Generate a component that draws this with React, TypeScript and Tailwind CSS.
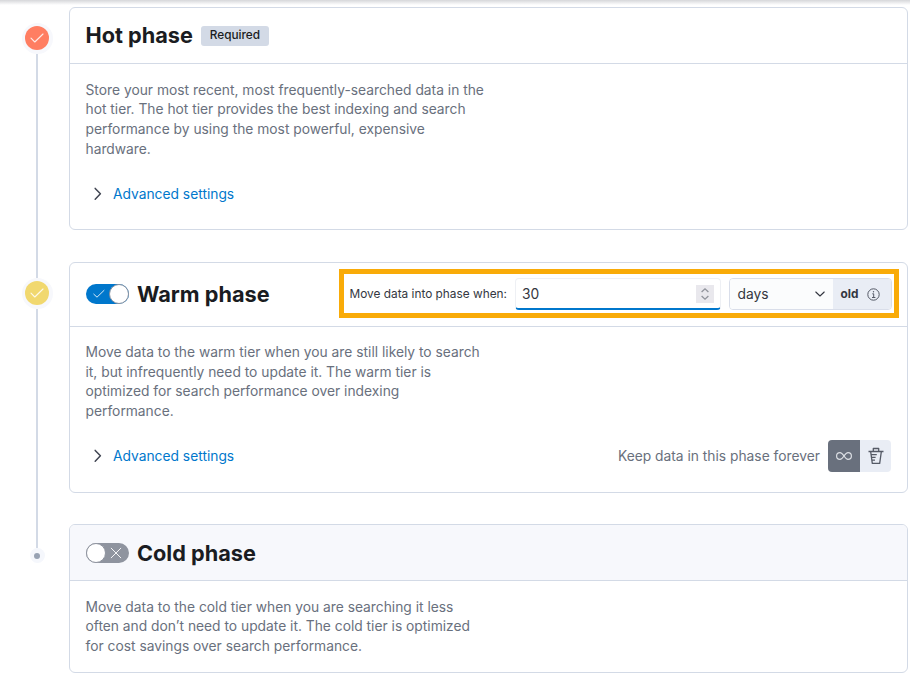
import type { ReactNode } from "react";

function StatusIcon({ color }: { color: string }) {
  return (
    <div className="flex size-[31px] shrink-0 items-center justify-center rounded-full bg-[#f7f8fc]">
      <div className={`flex size-[24px] items-center justify-center rounded-full ${color}`}>
        <svg width="16" height="16" viewBox="0 0 16 16" fill="none" stroke="#fff" strokeOpacity="0.85" strokeWidth="1.1" strokeLinecap="round" strokeLinejoin="round">
          <path d="M2 8.2 L5.8 12 L14 4" />
        </svg>
      </div>
    </div>
  );
}

function Timeline() {
  return (
    <div className="flex w-[69px] shrink-0 flex-col pt-[22.5px] pl-[21.8px]">
      <div className="flex w-[31px] flex-col items-center">
        <StatusIcon color="bg-[#ff7e62]" />
        <div className="h-[224px] w-[2px] bg-[#d3dae6]" />
        <StatusIcon color="bg-[#f1d86f]" />
        <div className="h-[239.5px] w-[2px] bg-[#d3dae6]" />
        <div className="flex size-[15px] items-center justify-center rounded-full bg-[#f5f7fc]">
          <div className="size-[6px] rounded-full bg-[#98a2b3]" />
        </div>
      </div>
    </div>
  );
}

function Title({ children }: { children: ReactNode }) {
  return <h2 className="text-[21.7px] leading-[28px] font-bold whitespace-nowrap text-[#1a1c21]">{children}</h2>;
}

function Description({ lines }: { lines: string[] }) {
  return (
    <p className="text-[13.81px] leading-[19.7px] whitespace-nowrap text-[#69707d]">
      {lines.map((line) => (
        <span key={line} className="block">{line}</span>
      ))}
    </p>
  );
}

function AdvancedSettings() {
  return (
    <button className="flex items-center pl-[4px] text-[13.8px] leading-[20px] text-[#0077cc]">
      <svg className="mr-[7.5px]" width="16" height="16" viewBox="0 0 16 16" fill="none" stroke="#404552" strokeWidth="1.5" strokeLinecap="round" strokeLinejoin="round">
        <path d="M5.2 2.4 L10.4 7.8 L5.2 13.2" />
      </svg>
      Advanced settings
    </button>
  );
}

function Toggle({ on }: { on: boolean }) {
  return on ? (
    <div className="flex h-[20px] w-[43.5px] items-center justify-between rounded-full bg-[#0077cc] pl-[7px]">
      <svg width="12" height="12" viewBox="0 0 12 12" fill="none" stroke="#fff" strokeOpacity="0.85" strokeWidth="1" strokeLinecap="round" strokeLinejoin="round">
        <path d="M0.8 6.2 L4 9.2 L11 2.4" />
      </svg>
      <div className="size-[20px] rounded-full border border-[#8b929f] bg-white" />
    </div>
  ) : (
    <div className="flex h-[20px] w-[43.5px] items-center justify-between rounded-full bg-[#8f949f] pr-[7px]">
      <div className="size-[20px] rounded-full border border-[#8f949f] bg-white" />
      <svg width="12" height="12" viewBox="0 0 12 12" fill="none" stroke="#fff" strokeOpacity="0.9" strokeWidth="1" strokeLinecap="round">
        <path d="M1.2 1.2 L10.8 10.8 M10.8 1.2 L1.2 10.8" />
      </svg>
    </div>
  );
}

function MinimumAge() {
  return (
    <div className="ml-auto flex h-[49px] w-[560px] items-center border-[5px] border-[#f9ab08] pl-[5.5px]">
      <span className="w-[165px] pt-[2px] text-[11.85px] whitespace-nowrap text-[#343741]">Move data into phase when:</span>
      <div className="mt-[1px] flex h-[32px] w-[206px] items-center justify-between rounded-[4px] border border-b-2 border-[#eef0f4] border-b-[#0077cc] bg-white pr-[6px] pl-[6.5px] text-[13.8px] text-[#343741]">
        <span className="pt-[2px]">30</span>
        <div className="flex h-[18px] w-[18px] items-center justify-center bg-[#e9e8ed]">
          <svg width="10" height="14" viewBox="0 0 10 14" fill="none" stroke="#90939b" strokeWidth="1.3">
            <path d="M1.6 5 L5 1.8 L8.4 5 M1.6 9 L5 12.2 L8.4 9" />
          </svg>
        </div>
      </div>
      <div className="mt-[1px] ml-[8px] flex h-[32px] w-[163px] overflow-hidden rounded-[4px] border border-[#d9deea]">
        <div className="flex w-[103px] items-center justify-between bg-[#fbfcfd] pr-[7px] pl-[8px] text-[13.8px] text-[#343741]">
          <span className="pt-[1px]">days</span>
          <svg width="12" height="12" viewBox="0 0 12 12" fill="none" stroke="#343741" strokeWidth="1.1" strokeLinecap="round" strokeLinejoin="round">
            <path d="M1.8 4 L6 8 L10.2 4" />
          </svg>
        </div>
        <div className="flex flex-1 items-center gap-[9px] bg-[#e9edf5] pl-[8px] text-[11.8px] font-bold text-[#343741]">
          <span className="pt-[2px]">old</span>
          <svg width="13" height="13" viewBox="0 0 13 13" fill="none" stroke="#535865" strokeWidth="1">
            <circle cx="6.5" cy="6.5" r="5.7" />
            <path d="M5.3 5.8 H6.7 V9.5 M5 9.5 H8.4" />
            <circle cx="6.5" cy="3.7" r="0.7" fill="#535865" stroke="none" />
          </svg>
        </div>
      </div>
    </div>
  );
}

function RetentionControl() {
  return (
    <div className="ml-auto flex items-center">
      <span className="mr-[8px] pt-[1px] text-[13.8px] whitespace-nowrap text-[#69707d]">Keep data in this phase forever</span>
      <div className="flex h-[32px] w-[63px] overflow-hidden rounded-[4px]">
        <button className="flex w-[32px] items-center justify-center bg-[#69707d]">
          <svg width="16" height="10" viewBox="0 0 16 10" fill="none" stroke="#dcdfe4" strokeWidth="1.2">
            <path d="M8 5 C6.4 2.6 5.4 1.6 4 1.6 A3.4 3.4 0 0 0 4 8.4 C5.4 8.4 6.4 7.4 8 5 C9.6 2.6 10.6 1.6 12 1.6 A3.4 3.4 0 0 1 12 8.4 C10.6 8.4 9.6 7.4 8 5 Z" />
          </svg>
        </button>
        <button className="flex w-[31px] items-center justify-center bg-[#e9edf5]">
          <svg width="16" height="18" viewBox="0 0 16 18" fill="none" stroke="#555a66" strokeWidth="1.3" strokeLinejoin="round">
            <path d="M0.5 4.5 H15.5 M5.3 4.3 V1.5 H10.7 V4.3 M2.7 4.8 L4.3 16.4 H11.7 L13.3 4.8 M3.3 7.6 H8.8 M3.7 10.4 H7.6 M4 13.2 H7" />
          </svg>
        </button>
      </div>
    </div>
  );
}

export default function App() {
  return (
    <div className="h-[682px] w-[910px] overflow-hidden bg-white font-['Inter',sans-serif]">
      <div className="h-[5px] bg-linear-to-b from-[#d6d7da] to-white" />
      <div className="-mt-[5px] flex">
        <Timeline />
        <main className="flex w-[839px] flex-col pt-[7px]">
          <section className="h-[223px] rounded-[6px] border border-[#d3dae6]">
            <header className="flex h-[56px] items-center border-b border-[#d3dae6] pl-[15.5px]">
              <div className="-mt-px"><Title>Hot phase</Title></div>
              <span className="ml-[8.5px] flex h-[20px] w-[68px] items-center justify-center rounded-[3px] bg-[#d3dae6] pr-px text-[11.8px] font-medium text-[#1a1c21]">Required</span>
            </header>
            <div className="pt-[16.7px] pl-[15.5px]">
              <Description
                lines={[
                  "Store your most recent, most frequently-searched data in the",
                  "hot tier. The hot tier provides the best indexing and search",
                  "performance by using the most powerful, expensive",
                  "hardware.",
                ]}
              />
              <div className="mt-[24.3px]"><AdvancedSettings /></div>
            </div>
          </section>

          <section className="mt-[32px] h-[231px] rounded-[6px] border border-[#d3dae6]">
            <header className="flex h-[64px] items-center border-b border-[#d3dae6] pr-[8px] pb-[2px] pl-[15.5px]">
              <Toggle on />
              <div className="ml-[8px]"><Title>Warm phase</Title></div>
              <MinimumAge />
            </header>
            <div className="pt-[15.9px] pl-[15.5px]">
              <Description
                lines={[
                  "Move data to the warm tier when you are still likely to search",
                  "it, but infrequently need to update it. The warm tier is",
                  "optimized for search performance over indexing",
                  "performance.",
                ]}
              />
              <div className="mt-[18.2px] flex items-center pr-[16px]">
                <AdvancedSettings />
                <RetentionControl />
              </div>
            </div>
          </section>

          <section className="mt-[31px] h-[149px] overflow-hidden rounded-[6px] border border-[#d3dae6]">
            <header className="flex h-[56px] items-center border-b border-[#d3dae6] bg-[#f7f8fc] pl-[15.5px]">
              <Toggle on={false} />
              <div className="ml-[8px]"><Title>Cold phase</Title></div>
            </header>
            <div className="pt-[16.7px] pl-[15.5px]">
              <Description
                lines={[
                  "Move data to the cold tier when you are searching it less",
                  "often and don’t need to update it. The cold tier is optimized",
                  "for cost savings over search performance.",
                ]}
              />
            </div>
          </section>
        </main>
      </div>
    </div>
  );
}
